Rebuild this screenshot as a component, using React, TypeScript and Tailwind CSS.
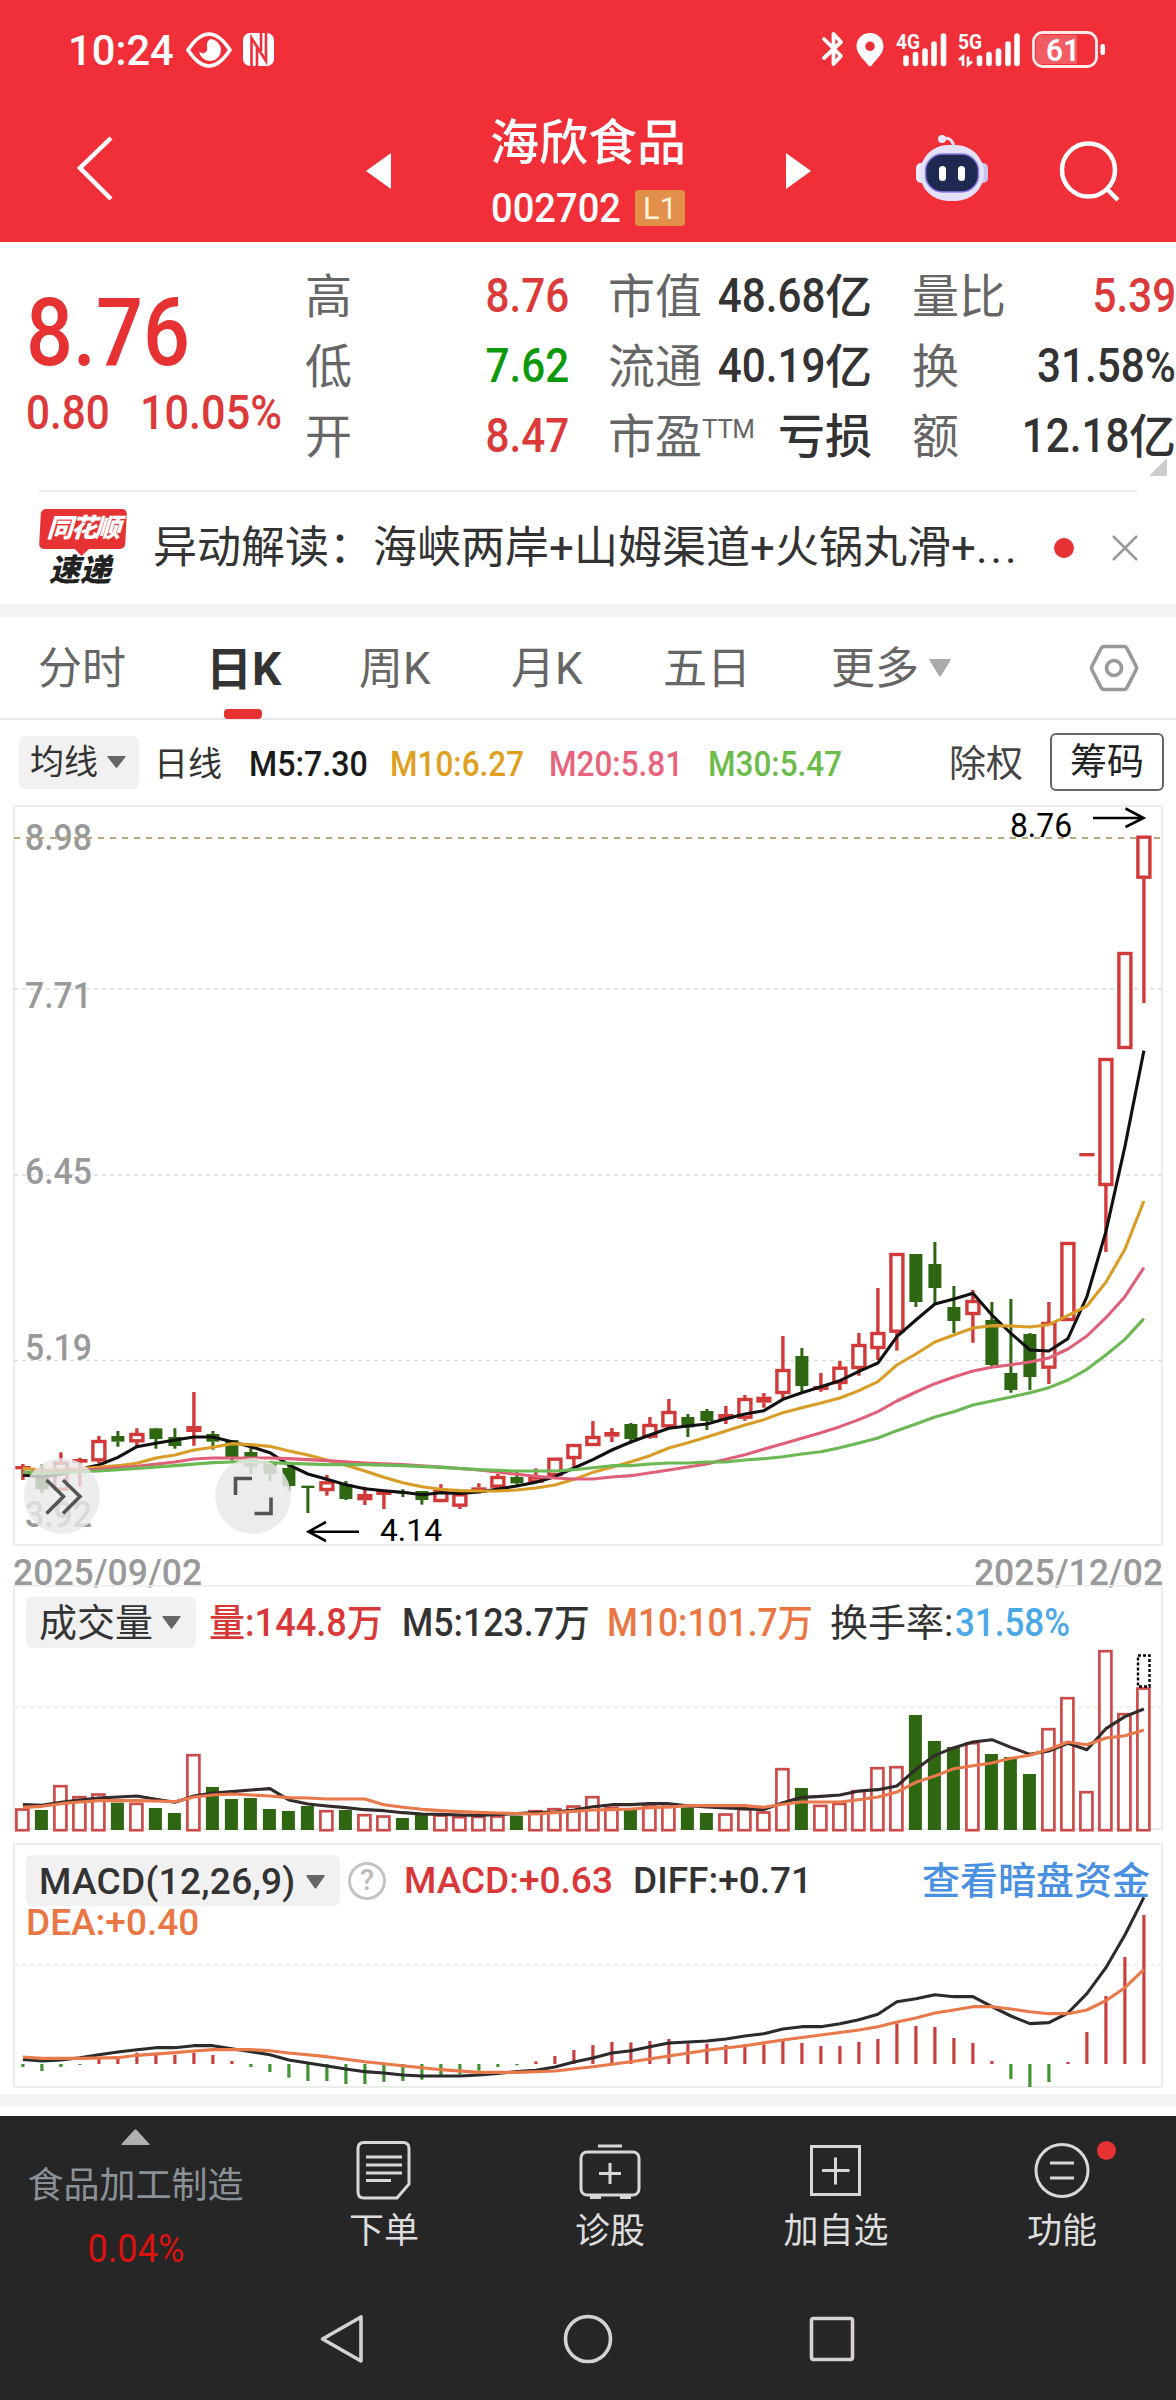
import type { ReactNode } from "react";

type Point = [number, number];

// x position of the n-th trading day, shared by all three charts
const dayX = (i: number) => 22.9 + 19 * i;

// [day, rising, body top, body bottom, high, low], in thirds of a pixel
type Candle = [number, boolean, number, number, number, number];

const candles: Candle[] = [
  [0, true, 858, 868, 852, 900],
  [1, false, 880, 928, 852, 938],
  [2, true, 845, 932, 817, 932],
  [3, true, 837, 848, 833, 920],
  [4, true, 780, 844, 768, 850],
  [5, false, 768, 785, 753, 800],
  [6, true, 759, 787, 745, 800],
  [7, false, 745, 777, 743, 806],
  [8, false, 771, 798, 745, 806],
  [9, true, 738, 756, 636, 797],
  [10, false, 762, 785, 753, 809],
  [11, false, 780, 833, 780, 842],
  [12, false, 816, 860, 800, 882],
  [13, false, 852, 882, 845, 903],
  [14, false, 864, 918, 855, 932],
  [15, false, 917, 924, 917, 999],
  [16, true, 904, 933, 885, 947],
  [17, false, 912, 957, 903, 960],
  [18, true, 942, 961, 920, 975],
  [19, true, 932, 945, 930, 987],
  [20, false, 935, 940, 928, 951],
  [21, false, 933, 960, 933, 974],
  [22, true, 930, 966, 913, 967],
  [23, true, 940, 980, 940, 987],
  [24, true, 922, 938, 910, 940],
  [25, true, 888, 923, 882, 925],
  [26, false, 891, 910, 876, 917],
  [27, true, 888, 908, 865, 908],
  [28, true, 833, 888, 833, 888],
  [29, true, 792, 837, 792, 860],
  [30, true, 768, 798, 723, 798],
  [31, true, 756, 770, 744, 786],
  [32, false, 732, 777, 729, 790],
  [33, true, 732, 773, 711, 776],
  [34, true, 693, 742, 657, 745],
  [35, false, 711, 742, 702, 771],
  [36, false, 693, 723, 687, 750],
  [37, true, 702, 718, 678, 732],
  [38, true, 654, 716, 645, 722],
  [39, true, 650, 668, 639, 683],
  [40, true, 567, 642, 468, 655],
  [41, false, 528, 618, 504, 635],
  [42, true, 618, 630, 579, 635],
  [43, true, 560, 612, 543, 630],
  [44, true, 492, 567, 459, 587],
  [45, true, 456, 507, 324, 540],
  [46, true, 219, 458, 219, 512],
  [47, false, 222, 366, 222, 381],
  [48, false, 252, 324, 186, 372],
  [49, false, 381, 423, 318, 459],
  [50, true, 360, 405, 330, 488],
  [51, false, 420, 555, 366, 558],
  [52, false, 579, 630, 357, 638],
  [53, false, 462, 591, 459, 630],
  [54, true, 426, 566, 366, 612],
  [55, true, 186, 423, 186, 423],
  [56, true, -81, -71, -81, -71],
  [57, true, -366, 18, -366, 216],
  [58, true, -684, -393, -684, -393],
  [59, true, -1033, -904, -1033, -531],
];

const ma5: number[] = [
  885, 892, 883, 867, 855, 832, 800, 790, 780, 771, 771, 785, 800, 818, 855,
  882, 898, 914, 926, 932, 937, 944, 938, 940, 936, 927, 918, 907, 890, 864,
  839, 810, 786, 765, 745, 738, 732, 716, 702, 692, 658, 638, 620, 602, 574,
  549, 470, 420, 372, 357, 340, 405, 460, 510, 513, 476, 350, 155, -100, -388,
];

const ma10: number[] = [
  865, 870, 870, 866, 862, 857, 850, 834, 825, 810, 802, 791, 794, 799, 813,
  825, 840, 856, 873, 892, 908, 920, 928, 932, 933, 933, 930, 924, 915, 898,
  877, 862, 845, 827, 804, 788, 771, 753, 735, 719, 698, 683, 669, 654, 632,
  605, 555, 522, 486, 465, 444, 437, 438, 441, 434, 407, 378, 307, 208, 63,
];

const ma20: Point[] = [
  [0, 878], [3, 871], [4, 867], [6, 859], [8, 846], [9, 837], [10, 834],
  [13, 834], [14, 836], [16, 842], [18, 849], [20, 854], [22, 861], [24, 870],
  [26, 883], [27, 889], [28, 894], [29, 897], [30, 897], [31, 891], [32, 887],
  [34, 870], [36, 852], [38, 824], [40, 791], [42, 758], [43, 740], [44, 719],
  [45, 695], [46, 663], [47, 636], [48, 611], [49, 591], [50, 573], [51, 562],
  [52, 554], [53, 546], [54, 534], [55, 507], [56, 468], [57, 413], [58, 350],
  [59, 263],
];

const ma30: Point[] = [
  [0, 876], [1, 880], [2, 878], [4, 873], [6, 865], [8, 857], [10, 848],
  [11, 846], [12, 846], [14, 850], [16, 854], [18, 854], [20, 857], [22, 862],
  [24, 869], [26, 873], [28, 873], [29, 869], [30, 863], [31, 857], [32, 857],
  [33, 852], [34, 849], [35, 849], [36, 846], [37, 846], [38, 840], [39, 836],
  [40, 830], [41, 822], [42, 815], [43, 803], [44, 789], [45, 774], [46, 752],
  [47, 732], [48, 711], [49, 695], [50, 675], [51, 663], [52, 651], [53, 638],
  [54, 623], [55, 600], [56, 568], [57, 525], [58, 478], [59, 416],
];

const volumeTops: number[] = [
  685, 690, 615, 648, 640, 668, 668, 684, 699, 522, 621, 657, 654, 687, 693,
  678, 690, 690, 702, 706, 714, 705, 703, 708, 707, 706, 707, 690, 684, 676,
  648, 680, 690, 676, 677, 682, 699, 700, 684, 694, 564, 624, 674, 668, 630,
  561, 558, 405, 483, 501, 486, 522, 531, 582, 444, 351, 633, 210, 399, 322,
];

const volumeMa5: number[] = [
  674, 676, 667, 660, 654, 651, 648, 658, 667, 648, 639, 635, 630, 626, 660,
  672, 678, 683, 689, 692, 698, 702, 703, 705, 706, 703, 701, 698, 696, 690,
  680, 674, 674, 671, 671, 677, 681, 684, 686, 689, 668, 652, 649, 645, 633,
  629, 618, 568, 526, 503, 486, 479, 502, 523, 513, 490, 509, 446, 410, 387,
];

const volumeMa10: number[] = [
  682, 679, 671, 666, 662, 662, 662, 663, 665, 651, 645, 642, 645, 648, 653,
  654, 657, 657, 657, 674, 682, 688, 692, 695, 697, 699, 701, 702, 698, 694,
  690, 689, 687, 683, 681, 677, 677, 677, 677, 682, 673, 666, 666, 666, 659,
  651, 636, 607, 588, 566, 557, 549, 535, 526, 508, 486, 494, 474, 467, 450,
];

const macdBars: number[] = [
  711, 723, 711, 705, 686, 684, 668, 668, 675, 668, 675, 693, 711, 726, 743,
  753, 753, 762, 762, 756, 753, 749, 737, 733, 722, 711, 706, 694, 678, 660,
  645, 636, 637, 633, 627, 640, 641, 645, 643, 643, 633, 639, 648, 648, 636,
  627, 580, 588, 591, 624, 639, 693, 747, 771, 756, 696, 606, 498, 381, 255,
];

const diff: number[] = [
  688, 693, 690, 683, 674, 666, 659, 653, 653, 647, 647, 656, 665, 674, 690,
  699, 708, 717, 725, 729, 735, 738, 738, 738, 735, 730, 725, 721, 711, 696,
  684, 669, 662, 650, 639, 636, 633, 627, 618, 611, 597, 590, 590, 581, 569,
  553, 515, 506, 494, 500, 500, 530, 558, 581, 578, 549, 491, 413, 315, 202,
];

const dea: Point[] = [
  [0, 681], [1, 685], [3, 685], [5, 683], [6, 676], [8, 668], [9, 663],
  [10, 659], [12, 659], [13, 662], [14, 669], [16, 680], [18, 695], [20, 707],
  [22, 719], [24, 727], [26, 727], [28, 723], [30, 710], [32, 695], [34, 678],
  [36, 661], [38, 647], [40, 630], [42, 615], [44, 600], [45, 590], [46, 576],
  [47, 564], [48, 549], [49, 540], [50, 530], [51, 530], [52, 537], [53, 545],
  [54, 551], [55, 551], [56, 540], [57, 512], [58, 473], [59, 418],
];

const indexed = (values: number[]): Point[] => values.map((v, i) => [i, v]);

function Line({ points, base, color }: { points: Point[]; base: number; color: string }) {
  return (
    <polyline
      points={points.map(([i, v]) => `${dayX(i)},${base + v / 3}`).join(" ")}
      fill="none"
      stroke={color}
      strokeWidth={3.1}
      strokeLinejoin="round"
    />
  );
}

function Grid({ y, color = "#dcdcdc" }: { y: number; color?: string }) {
  return <path d={`M14 ${y}H1162`} stroke={color} strokeWidth={1.5} strokeDasharray="4 4" />;
}

function PriceChart() {
  const labels: [string, number][] = [
    ["8.98", 850],
    ["7.71", 1008],
    ["6.45", 1184],
    ["5.19", 1359.5],
    ["3.92", 1527],
  ];
  return (
    <svg className="block" width="1176" height="744" viewBox="0 804 1176 744">
      <rect x="14" y="806" width="1148" height="739" fill="none" stroke="#ececec" strokeWidth="2" />
      <Grid y={989} />
      <Grid y={1175} />
      <Grid y={1360.5} />
      {labels.map(([text, y]) => (
        <text key={text} x="25" y={y} fontSize="36" fontWeight="500" fill="#999" textLength="67" lengthAdjust="spacingAndGlyphs">
          {text}
        </text>
      ))}
      <path d="M14 838H1162" stroke="#b9a67c" strokeWidth="1.8" strokeDasharray="6 6" />
      {candles.map(([i, up, top, bottom, high, low]) => {
        const x = dayX(i);
        const y = (v: number) => 1180 + v / 3;
        const color = up ? "#d23a3a" : "#2f6612";
        const solid = !up || bottom - top < 20;
        return (
          <g key={i} stroke={color}>
            <path d={`M${x} ${y(high)}V${y(top)}M${x} ${y(bottom)}V${y(low)}`} strokeWidth={up ? 3.4 : 3} />
            {solid ? (
              <rect x={x - (up ? 7.6 : 6.5)} y={y(top)} width={up ? 15.2 : 13} height={(bottom - top) / 3} fill={color} stroke="none" />
            ) : (
              <rect x={x - 6} y={y(top) + 1.5} width={12} height={(bottom - top) / 3 - 3} fill="#fff" strokeWidth={3.4} />
            )}
          </g>
        );
      })}
      <Line points={indexed(ma5)} base={1180} color="#111" />
      <Line points={indexed(ma10)} base={1180} color="#d99d27" />
      <Line points={ma20} base={1180} color="#e0607a" />
      <Line points={ma30} base={1180} color="#6cb854" />

      <g fill="none" stroke="#000" strokeWidth="2.6">
        <path d="M1093 818H1143M1125.500 808.500L1143.500 818L1125.500 827" />
        <path d="M359 1531.700H309M326 1522L308.500 1531.700L326 1541" />
      </g>
      <text x="1010" y="837" fontSize="33" textLength="62" lengthAdjust="spacingAndGlyphs">8.76</text>
      <text x="380" y="1541" fontSize="32" textLength="62" lengthAdjust="spacingAndGlyphs">4.14</text>

      <circle cx="62" cy="1496" r="38" fill="#e9e9e9" opacity="0.8" />
      <circle cx="253" cy="1496" r="38" fill="#e9e9e9" opacity="0.85" />
      <g fill="none" stroke="#555" strokeWidth="3.6">
        <path d="M46.500 1480L63.500 1496.500L46.500 1513.500M63 1480L80 1496.500L63 1513.500" />
        <path d="M235.500 1495V1478.500H252M271 1497.500V1513.500H254.500" />
      </g>
    </svg>
  );
}

function VolumeChart() {
  return (
    <svg className="absolute left-0 top-0" width="1176" height="248" viewBox="0 1585 1176 248">
      <rect x="14" y="1585.500" width="1148" height="243.500" fill="none" stroke="#ececec" strokeWidth="2" />
      <Grid y={1707} color="#e8e8e8" />
      {volumeTops.map((v, i) => {
        const x = dayX(i) - 0.5;
        const top = 1580 + v / 3;
        return candles[i][1] ? (
          <rect key={i} x={x - 6} y={top + 1.2} width={12} height={1829 - top} fill="#fff" stroke="#cc4c4c" strokeWidth={2.7} />
        ) : (
          <rect key={i} x={x - 6.5} y={top} width={13} height={1830 - top} fill="#2f6612" />
        );
      })}
      <rect x="1138" y="1655.500" width="11.500" height="31" fill="none" stroke="#000" strokeWidth="2.400" strokeDasharray="3 2" />
      <Line points={indexed(volumeMa5)} base={1580} color="#332a2a" />
      <Line points={indexed(volumeMa10)} base={1580} color="#e9784a" />
    </svg>
  );
}

function MacdChart() {
  return (
    <svg className="absolute left-0 top-0" width="1176" height="246" viewBox="0 1843 1176 246">
      <rect x="14" y="1844" width="1148" height="243" fill="none" stroke="#ececec" strokeWidth="2" />
      <Grid y={1965} color="#e8e8e8" />
      {macdBars.map((v, i) => (
        <path key={i} d={`M${dayX(i)} 2064V${1830 + v / 3}`} stroke={v < 702 ? "#c93f3f" : "#3f9430"} strokeWidth={3.2} />
      ))}
      <Line points={indexed(diff)} base={1830} color="#2b2b2b" />
      <Line points={dea} base={1830} color="#e9784a" />
    </svg>
  );
}

function Triangle({ className }: { className: string }) {
  return (
    <svg viewBox="0 0 20 14" preserveAspectRatio="none" className={className} fill="currentColor">
      <path d="M1 0h18q1.200 0 .5 1.200L11 13q-1 1.400-2 0L.5 1.200Q-.2 0 1 0z" />
    </svg>
  );
}

function StatusBar() {
  return (
    <div className="flex h-[100px] items-center pl-[68px] pr-[70px]">
      <span className="w-[118px] origin-left scale-x-97 text-[43px] font-medium leading-none">10:24</span>
      <svg width="46" height="36" viewBox="0 0 46 36">
        <path d="M2 18Q23-14 44 18Q23 50 2 18z" fill="none" stroke="#fff" strokeWidth="3.500" />
        <path d="M24 7a11 11 0 1 1-11 12c2 3 7 3 8-1 1-4-2-7 3-11z" fill="#fff" />
      </svg>
      <svg className="ml-[11px]" width="32" height="34" viewBox="0 0 32 34">
        <rect x="0" y="0" width="31" height="33" rx="7" fill="#fff" />
        <path d="M8.500 33V5L23 28V0M8.500 5v4M14 14v19M18 0v18" fill="none" stroke="#f12f38" strokeWidth="2.600" />
      </svg>
      <svg className="ml-auto" width="286" height="44" viewBox="820 28 286 44">
        <path d="M824 39L841 56L833.500 64V34L841 42L824 58" fill="none" stroke="#fff" strokeWidth="3.800" strokeLinejoin="round" strokeLinecap="round" />
        <path fillRule="evenodd" d="M870 33c8 0 13.500 6 13.500 13 0 8-8 14-11.500 19-1 1.600-3 1.600-4 0C864.500 60 856.500 54 856.500 46c0-7 5.500-13 13.500-13zm0 8.500a4.800 4.800 0 1 0 0 9.600 4.800 4.800 0 0 0 0-9.600z" fill="#fff" />
        <g stroke="#fff" strokeWidth="5.600" strokeLinecap="round">
          <path d="M906 58v5.500M915.500 54.500V63.500M925 51V63.500M934 44V63.500M943.500 36V63.500" />
          <path d="M979.500 58v5.500M989 54.500V63.500M998.500 51V63.500M1008 44V63.500M1017 36V63.500" />
        </g>
        <g fill="#fff" fontWeight="700" fontSize="21">
          <text x="896" y="48.500" textLength="24" lengthAdjust="spacingAndGlyphs">4G</text>
          <text x="958" y="48.500" textLength="24" lengthAdjust="spacingAndGlyphs">5G</text>
        </g>
        <path d="M959 60l4-3.500V66M968 56.500V65l4-3.500" fill="none" stroke="#fff" strokeWidth="2.600" />
        <rect x="1033.500" y="32.500" width="63" height="34" rx="9" fill="none" stroke="#fff" strokeOpacity=".9" strokeWidth="2.800" />
        <path d="M1042 35h35v29h-35q-6 0-6-6V41q0-6 6-6z" fill="#fff" opacity=".22" />
        <rect x="1100.500" y="44" width="4.500" height="11" rx="2" fill="#fff" />
        <text x="1046" y="61" fill="#fff" fontWeight="600" fontSize="32" textLength="34" lengthAdjust="spacingAndGlyphs">61</text>
      </svg>
    </div>
  );
}

function RobotIcon() {
  return (
    <svg width="74" height="68" viewBox="0 0 74 68">
      <path d="M27 5Q37 2 39 13" fill="none" stroke="#e6dcf5" strokeWidth="3" />
      <circle cx="27" cy="5" r="4" fill="#eee6fa" />
      <rect x="1" y="29" width="12" height="20" rx="5" fill="#ece9fb" />
      <rect x="61" y="29" width="12" height="20" rx="5" fill="#c9c4f0" />
      <rect x="5" y="11" width="64" height="56" rx="28" fill="#e4e1fa" />
      <rect x="10.500" y="20" width="53" height="38" rx="17" fill="#1f2850" stroke="#8d7bea" strokeWidth="1.500" />
      <rect x="24" y="32" width="7" height="15" rx="3.500" fill="#fff" />
      <rect x="43" y="32" width="7" height="15" rx="3.500" fill="#fff" />
    </svg>
  );
}

function Header() {
  return (
    <header className="h-[242px] bg-[#f12f38] text-white">
      <StatusBar />
      <div className="flex h-[142px] items-start">
        <svg className="ml-[74px] mt-[34px]" width="42" height="68" viewBox="0 0 42 68" fill="none" stroke="#fff" strokeWidth="4.500">
          <path d="M37 4L6 34L37 65" />
        </svg>
        <svg className="ml-[250px] mt-[53px]" width="25" height="36" viewBox="0 0 25 36" fill="#fff">
          <path d="M25 0V36L0 18z" />
        </svg>
        <div className="ml-[79px] w-[236px] pt-[18px] text-center">
          <div className="text-[49px] font-medium leading-[52px]">海欣食品</div>
          <div className="mt-[18px] flex items-center pl-[21px]">
            <span className="w-[144px] origin-left scale-x-93 whitespace-nowrap text-left text-[41px] font-medium leading-[40px]">
              002702
            </span>
            <span className="h-[36px] w-[50px] rounded bg-[#e28f4a] text-[31px] leading-[37px] text-[#fff2d8]">L1</span>
          </div>
        </div>
        <svg className="ml-[80px] mt-[53px]" width="25" height="36" viewBox="0 0 25 36" fill="#fff">
          <path d="M0 0L25 18L0 36z" />
        </svg>
        <div className="ml-[104px] mt-[34px]">
          <RobotIcon />
        </div>
        <svg className="ml-[69px] mt-[40px]" width="64" height="64" viewBox="0 0 64 64" fill="none" stroke="#fff" strokeWidth="4.500">
          <circle cx="30.500" cy="30" r="26.500" />
          <path d="M49 49L60 60" />
        </svg>
      </div>
    </header>
  );
}

interface StatProps {
  label: ReactNode;
  value?: string;
  unit?: string;
  className?: string;
}

function Stat({ label, value, unit, className = "text-[#333]" }: StatProps) {
  return (
    <div className="flex h-[70px] items-center whitespace-nowrap leading-none">
      <span className="mr-auto text-[47px] text-[#666]">{label}</span>
      {value && <span className={`origin-right scale-x-88 text-[48px] font-medium ${className}`}>{value}</span>}
      {unit && <span className={`text-[47px] font-medium ${className}`}>{unit}</span>}
    </div>
  );
}

function Quote() {
  return (
    <section className="flex h-[248px] pt-[19px]">
      <div className="w-[305px] shrink-0 whitespace-nowrap pl-[26px] font-medium text-[#e63232]">
        <div className="mt-[23px] origin-left scale-x-87 text-[95px] leading-[98px]">8.76</div>
        <div className="mt-[7px] flex text-[48px] leading-[48px] text-[#dc3a3a]">
          <span className="w-[114px] origin-left scale-x-88">0.80</span>
          <span className="origin-left scale-x-90">10.05%</span>
        </div>
      </div>
      <div className="w-[264px] shrink-0">
        <Stat label="高" value="8.76" className="text-[#dc3a3a]" />
        <Stat label="低" value="7.62" className="text-[#0c990c]" />
        <Stat label="开" value="8.47" className="text-[#dc3a3a]" />
      </div>
      <div className="ml-[39px] w-[264px] shrink-0">
        <Stat label="市值" value="48.68" unit="亿" />
        <Stat label="流通" value="40.19" unit="亿" />
        <Stat
          label={
            <>
              市盈<sup className="-top-[15px] text-[26px] leading-none tracking-[-0.500px]">TTM</sup>
            </>
          }
          unit="亏损"
        />
      </div>
      <div className="relative ml-[40px] w-[264px] shrink-0">
        <Stat label="量比" value="5.39" className="text-[#dc3a3a]" />
        <Stat label="换" value="31.58%" />
        <Stat label="额" value="12.18" unit="亿" />
        <svg className="absolute bottom-[14px] right-[9px]" width="18" height="18" viewBox="0 0 18 18" fill="#ccc">
          <path d="M18 0V18H0z" />
        </svg>
      </div>
    </section>
  );
}

function News() {
  return (
    <section className="mx-[38px] flex h-[114px] items-center border-t-2 border-[#eee] leading-none">
      <div className="flex w-[90px] flex-col items-center font-black italic">
        <div className="relative h-[40px] w-[86px] -skew-x-3 rounded-[5px] bg-[#e63232] text-center text-[26px] leading-[39px] tracking-[-2px] text-white">
          同花顺
          <span className="absolute -bottom-[5px] left-[38px] size-[10px] rotate-45 bg-[#e63232]" />
        </div>
        <div className="mt-[6px] pr-[6px] text-[31px] leading-[32px] text-[#222]">速递</div>
      </div>
      <p className="ml-[25px] w-[882px] whitespace-nowrap text-[44px] text-[#333]">
        异动解读：海峡两岸+山姆渠道+火锅丸滑+<span className="tracking-[3px]">...</span>
      </p>
      <span className="ml-[19px] size-[20px] rounded-full bg-[#e63232]" />
      <svg className="ml-auto" width="26" height="26" viewBox="0 0 26 26" stroke="#999" strokeWidth="2.500">
        <path d="M1 1L25 25M25 1L1 25" />
      </svg>
    </section>
  );
}

function Tabs() {
  return (
    <nav className="flex h-[103px] items-center border-b-2 border-[#e8e8e8] pl-[38px] text-[44px] leading-none text-[#666]">
      <span className="w-[168px] pt-[2px]">分时</span>
      <span className="relative flex h-full w-[153px] items-center pt-[2px] text-[46px] font-bold text-[#333]">
        日K
        <span className="absolute -bottom-[1px] left-[18px] h-[10px] w-[38px] rounded-[4px] bg-[#e63232]" />
      </span>
      <span className="w-[152px] pt-[2px]">周K</span>
      <span className="w-[152px] pt-[2px]">月K</span>
      <span className="w-[168px] pt-[2px]">五日</span>
      <span className="w-[98px] pt-[2px]">更多</span>
      <Triangle className="h-[18px] w-[22px] text-[#aaa]" />
      <svg className="ml-[138px]" width="50" height="48" viewBox="0 0 50 48" fill="none" stroke="#999" strokeWidth="3.600">
        <path d="M15 2.500H35q2 0 3 2L47 22q1 2 0 4L38 43.500q-1 2-3 2H15q-2 0-3-2L3 26q-1-2 0-4L12 4.500q1-2 3-2z" />
        <circle cx="25" cy="24" r="7.500" />
      </svg>
    </nav>
  );
}

function Averages() {
  return (
    <div className="flex h-[84px] items-center whitespace-nowrap pl-[19px] text-[34px] font-medium leading-none">
      <div className="flex h-[53px] w-[120px] items-center justify-between rounded-[6px] bg-[#f1f1f1] pl-[11px] pr-[13px] font-normal text-[#333]">
        均线
        <Triangle className="h-[12px] w-[19px] text-[#666]" />
      </div>
      <span className="ml-[15px] w-[95px] pt-[4px] font-normal text-[#333]">日线</span>
      <span className="w-[141px] origin-left scale-x-92 pt-[4px] text-[35px] text-[#1a1a1a]">M5:7.30</span>
      <span className="w-[159px] origin-left scale-x-90 pt-[4px] text-[35px] text-[#dfa020]">M10:6.27</span>
      <span className="w-[159px] origin-left scale-x-90 pt-[4px] text-[35px] text-[#e8647c]">M20:5.81</span>
      <span className="w-[241px] origin-left scale-x-90 pt-[4px] text-[35px] text-[#6cbc4c]">M30:5.47</span>
      <span className="w-[101px] pt-[5px] text-[37px] font-normal text-[#444]">除权</span>
      <span className="flex h-[58px] w-[114px] items-center justify-center rounded-[6px] border-2 border-[#666] text-[37px] font-normal text-[#222]">
        筹码
      </span>
    </div>
  );
}

function VolumePanel() {
  return (
    <section className="relative h-[258px]">
      <VolumeChart />
      <div className="relative flex items-center whitespace-nowrap pl-[26px] pt-[12px] text-[38px] font-medium leading-none">
        <div className="flex h-[51px] w-[170px] items-center justify-between rounded-[6px] bg-[#f1f1f1] pl-[13px] pr-[15px] font-normal text-[#333]">
          成交量
          <Triangle className="h-[13px] w-[19px] text-[#666]" />
        </div>
        <span className="ml-[13px] w-[193px] origin-left scale-x-95 text-[#d93838]">量:144.8万</span>
        <span className="w-[205px] origin-left scale-x-94 text-[#333]">M5:123.7万</span>
        <span className="w-[223px] origin-left scale-x-93 text-[#ea7644]">M10:101.7万</span>
        <span className="w-[125px] font-normal text-[#333]">换手率:</span>
        <span className="origin-left scale-x-92 text-[#4aa8e4]">31.58%</span>
      </div>
    </section>
  );
}

function MacdPanel() {
  return (
    <section className="relative h-[251px]">
      <MacdChart />
      <div className="relative flex items-center whitespace-nowrap pl-[26px] pt-[12px] text-[37px] font-medium leading-none">
        <div className="flex h-[51px] w-[314px] items-center justify-between rounded-[6px] bg-[#f1f1f1] pl-[13px] pr-[15px] pt-[2px] text-[#333]">
          <span className="tracking-[0.300px]">MACD(12,26,9)</span>
          <Triangle className="h-[14px] w-[19px] text-[#666]" />
        </div>
        <span className="ml-[8px] flex size-[38px] items-center justify-center rounded-full border-3 border-[#c4c4c4] text-[29px] text-[#bbb]">?</span>
        <span className="ml-[18px] w-[229px] text-[#d93838]">MACD:+0.63</span>
        <span className="w-[289px] text-[#333]">DIFF:+0.71</span>
        <span className="text-[38px] text-[#4a90e0]">查看暗盘资金</span>
      </div>
      <div className="relative pl-[26px] text-[37px] font-medium leading-[34px] text-[#ea7644]">DEA:+0.40</div>
    </section>
  );
}

function BottomItem({ label, children }: { label: string; children: ReactNode }) {
  return (
    <div className="flex w-[226px] flex-col items-center text-[35px] leading-none text-[#ddd]">
      <svg width="64" height="64" viewBox="0 0 64 64" fill="none" stroke="#d8d8d8" strokeWidth="3">
        {children}
      </svg>
      <span className="mt-[12px]">{label}</span>
    </div>
  );
}

function BottomBar() {
  return (
    <footer className="h-[284px] bg-[#262626]">
      <div className="flex h-[172px]">
        <div className="flex w-[271px] flex-col items-center pt-[13px] leading-none">
          <Triangle className="h-[16px] w-[29px] rotate-180 text-[#b0b0b0]" />
          <span className="mt-[23px] text-[36px] text-[#8a9297]">食品加工制造</span>
          <span className="mt-[26px] scale-x-95 text-[38px] text-[#dc120e]">0.04%</span>
        </div>
        <div className="flex pt-[22px]">
          <BottomItem label="下单">
            <path d="M12 4.500H51q6 0 6 6V46L45 60H12q-6 0-6-6V10.500q0-6 6-6z" />
            <path d="M14 19H50M14 27H50M14 35H50M14 42.500H39" />
          </BottomItem>
          <BottomItem label="诊股">
            <rect x="3" y="14" width="58" height="43" rx="6" />
            <path d="M20 8H44M32 25V46M21 35.500H43M12 59.500H23M42 59.500H53" />
          </BottomItem>
          <BottomItem label="加自选">
            <rect x="7.500" y="8.500" width="48" height="48" />
            <path d="M31.500 19.500V46.500M18 32.500H45.500" />
          </BottomItem>
          <div className="relative">
            <BottomItem label="功能">
              <circle cx="32" cy="32.500" r="26" />
              <path d="M20 25H44M20 40H44" />
            </BottomItem>
            <span className="absolute left-[148px] top-[3px] size-[19px] rounded-full bg-[#e63232]" />
          </div>
        </div>
      </div>
      <div className="flex h-[112px] items-start pl-[318px] pt-[24px]">
        <svg width="540" height="56" viewBox="318 2312 540 56" fill="none" stroke="#d6d2d4" strokeWidth="3.600" strokeLinejoin="round">
          <path d="M322.500 2339L361 2317V2361z" />
          <circle cx="588" cy="2339" r="22.500" />
          <rect x="811.500" y="2318.500" width="41" height="41" rx="2" />
        </svg>
      </div>
    </footer>
  );
}

export default function App() {
  return (
    <div className="h-[2400px] w-[1176px] overflow-hidden bg-white font-['Roboto','Noto_Sans_CJK_SC',sans-serif]">
      <Header />
      <Quote />
      <News />
      <div className="h-[13px] bg-[#f4f4f4]" />
      <Tabs />
      <Averages />
      <PriceChart />
      <div className="flex h-[37px] justify-between px-[13px] text-[37px] font-medium leading-[49px] text-[#999]">
        <span className="origin-left scale-x-96">2025/09/02</span>
        <span className="origin-right scale-x-96">2025/12/02</span>
      </div>
      <VolumePanel />
      <MacdPanel />
      <div className="mb-[9px] h-[13px] bg-[#f4f4f4]" />
      <BottomBar />
    </div>
  );
}
